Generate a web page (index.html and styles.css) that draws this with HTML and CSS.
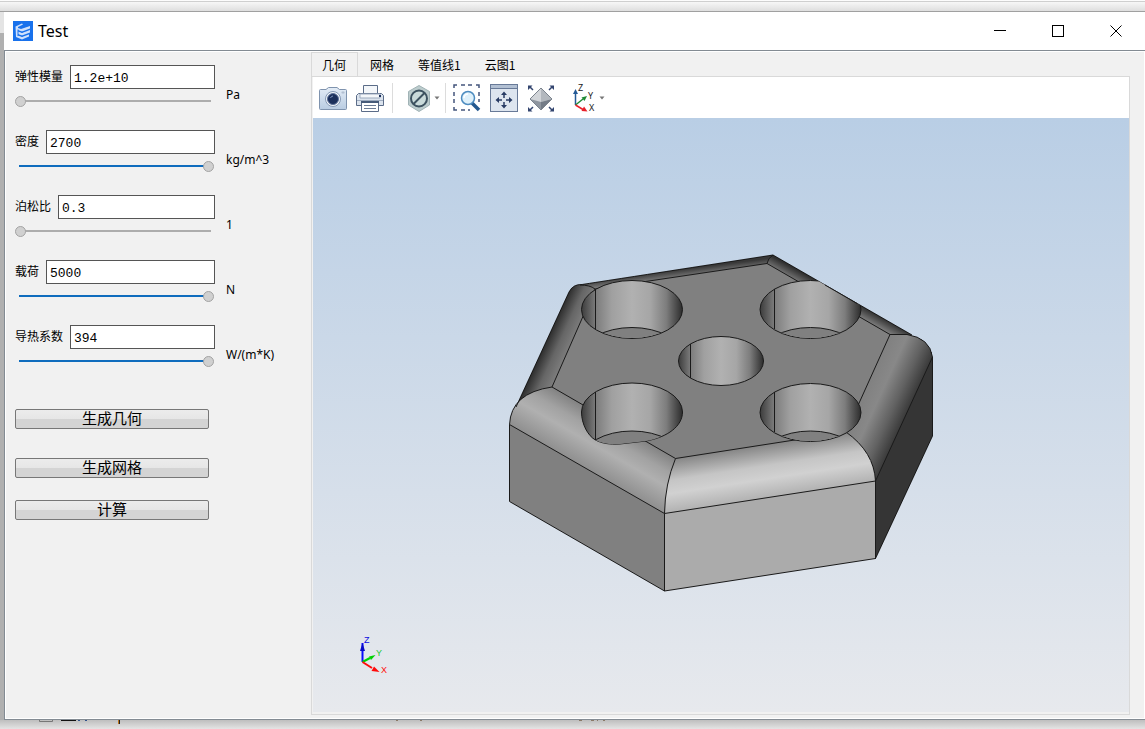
FILE: index.html
```html
<!DOCTYPE html>
<html lang="zh-CN">
<head>
    <meta charset="UTF-8">
    <meta name="viewport" content="width=device-width, initial-scale=1.0">
    <title>Test</title>
    <link rel="stylesheet" href="styles.css">
</head>
<body>
    <div class="backdrop-top"></div>

    <div class="window">
        <header class="titlebar">
            <svg class="app-icon" width="20" height="20" viewBox="0 0 20 20" aria-hidden="true">
                <rect width="20" height="20" fill="#1871ec"/>
                <path d="M2.500 5.500L9 2.500L10 3.500L5 6V7L8 8L17 5V7.500L9 10.500L5 9V10.500L9 12L17 9V11.500L9 14.500L5 13V14.500L9 16L16 13.500V15.500L9 18.500L3 16Z" fill="#cfe1fc"/>
                <path d="M5 8.500V15M9 10.500V12M9 14.500V16" stroke="#1871ec" stroke-width="1"/>
            </svg>
            <h1>Test</h1>
            <div class="window-buttons">
                <button type="button" aria-label="最小化"><svg width="12" height="12" viewBox="0 0 12 12"><path d="M0 5.500H12"/></svg></button>
                <button type="button" aria-label="最大化"><svg width="12" height="12" viewBox="0 0 12 12"><path d="M.5 .5H11.500V11.500H.5Z"/></svg></button>
                <button type="button" aria-label="关闭"><svg width="12" height="12" viewBox="0 0 12 12"><path class="cross" d="M.5 .5L11.500 11.500M11.500 .5L.5 11.500"/></svg></button>
            </div>
        </header>

        <div class="content">
            <form class="params">
                <div class="param">
                    <div class="field">
                        <label for="modulus">弹性模量</label>
                        <input type="text" id="modulus" value="1.2e+10">
                    </div>
                    <input type="range" class="slider" aria-label="弹性模量" min="0" max="100" value="0">
                    <span class="unit">Pa</span>
                </div>
                <div class="param">
                    <div class="field">
                        <label for="density">密度</label>
                        <input type="text" id="density" value="2700">
                    </div>
                    <input type="range" class="slider full" aria-label="密度" min="0" max="100" value="100">
                    <span class="unit">kg/m^3</span>
                </div>
                <div class="param">
                    <div class="field">
                        <label for="poisson">泊松比</label>
                        <input type="text" id="poisson" value="0.3">
                    </div>
                    <input type="range" class="slider" aria-label="泊松比" min="0" max="100" value="0">
                    <span class="unit">1</span>
                </div>
                <div class="param">
                    <div class="field">
                        <label for="load">载荷</label>
                        <input type="text" id="load" value="5000">
                    </div>
                    <input type="range" class="slider full" aria-label="载荷" min="0" max="100" value="100">
                    <span class="unit">N</span>
                </div>
                <div class="param">
                    <div class="field">
                        <label for="conductivity">导热系数</label>
                        <input type="text" id="conductivity" value="394">
                    </div>
                    <input type="range" class="slider full" aria-label="导热系数" min="0" max="100" value="100">
                    <span class="unit">W/(m*K)</span>
                </div>

                <div class="actions">
                    <button type="button" class="geometry">生成几何</button>
                    <button type="button" class="mesh">生成网格</button>
                    <button type="button">计算</button>
                </div>
            </form>

            <main class="viewer">
                <div class="tabs" role="tablist">
                    <button type="button" role="tab" class="active" aria-selected="true">几何</button>
                    <button type="button" role="tab">网格</button>
                    <button type="button" role="tab">等值线1</button>
                    <button type="button" role="tab">云图1</button>
                </div>

                <div class="pane">
                    <div class="toolbar">
                        <div class="group">
                            <button type="button" aria-label="截图">
                                <svg width="28" height="28" viewBox="0 0 28 28">
                                    <defs>
                                        <linearGradient id="cam" x1="0" y1="0" x2="0" y2="1"><stop offset="0" stop-color="#e3ecf6"/><stop offset="1" stop-color="#b9cce2"/></linearGradient>
                                    </defs>
                                    <path d="M1.500 5.500H7L9.500 3.500H18L20.500 5.500H26.500Q27.500 5.500 27.500 6.500V24.500Q27.500 25.500 26.500 25.500H1.500Q.5 25.500 .5 24.500V6.500Q.5 5.500 1.500 5.500Z" fill="url(#cam)" stroke="#7f93ae"/>
                                    <circle cx="14" cy="15" r="7.500" fill="#f3f7fb" stroke="#8598b4"/>
                                    <circle cx="14" cy="15" r="5.500" fill="#1b2f5b" stroke="#5d7199"/>
                                    <path d="M11.500 14A3 3 0 0 1 14 12" fill="none" stroke="#7e95bd" stroke-width="1"/>
                                    <rect x="23" y="8" width="2" height="1" fill="#fff" stroke="#8598b4" stroke-width=".5"/>
                                </svg>
                            </button>
                            <button type="button" aria-label="打印">
                                <svg width="28" height="28" viewBox="0 0 28 28">
                                    <path d="M7.500 10V1.500H21.500V10" fill="#f4f7fa" stroke="#5b6c88"/>
                                    <path d="M2.500 9.500H25.500L27.500 11.500V21.500H.5V11.500Z" fill="#dbe3ed" stroke="#5b6c88"/>
                                    <path d="M4 10H24V14H4Z" fill="#f4f7fa" stroke="#9dabbf"/>
                                    <path d="M1 16.500H27" stroke="#9dabbf"/>
                                    <path d="M5.500 17.500H22.500V27.500H5.500Z" fill="#fff" stroke="#5b6c88"/>
                                    <path d="M5 18H23" stroke="#465a79" stroke-width="2"/>
                                    <path d="M8 21.500H20M8 24.500H20" stroke="#6b7b95"/>
                                    <rect x="23" y="11" width="2" height="2" fill="#1b2f5b"/>
                                </svg>
                            </button>
                        </div>
                        <div class="group display">
                            <button type="button" class="dropdown" aria-label="显示模式">
                                <svg width="28" height="28" viewBox="0 0 28 28">
                                    <path d="M14 1.500L24.500 7.500V21L14 27.500L3.500 21V7.500Z" fill="#bccccd" stroke="#a1b3b6"/>
                                    <circle cx="14" cy="14.500" r="8" fill="#c9dada" stroke="#3d5260" stroke-width="2"/>
                                    <path d="M8.500 20L19.500 9" stroke="#3d5260" stroke-width="2"/>
                                </svg>
                                <svg class="caret" width="6" height="4" viewBox="0 0 6 4"><path d="M.5 .5H5.500L3 3.500Z" fill="#777"/></svg>
                            </button>
                        </div>
                        <div class="group views">
                            <button type="button" aria-label="框选放大">
                                <svg width="28" height="28" viewBox="0 0 28 28">
                                    <path d="M1 4V1H4M8 1H12M15 1H19M23 1H26V4M26 8V12M26 15V18M1 8V12M1 15V19M1 23V26H4M8 26H12M15 26H17" fill="none" stroke="#44557c" stroke-width="1.500"/>
                                    <path d="M19 19L26 26" stroke="#24588f" stroke-width="3.500"/>
                                    <circle cx="15" cy="14" r="6.500" fill="#dff1fb" stroke="#4d8cc0" stroke-width="1.500"/>
                                    <path d="M11 14A4 4 0 0 1 15 10" fill="none" stroke="#fff" stroke-width="1.500"/>
                                </svg>
                            </button>
                            <button type="button" aria-label="平移">
                                <svg width="28" height="28" viewBox="0 0 28 28">
                                    <rect x=".5" y=".5" width="27" height="27" fill="#dde5ef" stroke="#687a98"/>
                                    <rect x="1" y="1" width="26" height="3" fill="#b2c0d3"/>
                                    <path d="M1 4.500H27" stroke="#687a98"/>
                                    <path d="M14 10V14M14 18V22M8 16H12M16 16H20" stroke="#283b64" stroke-width="1.500"/>
                                    <path d="M14 7.500L17 11H11ZM14 24.500L17 21H11ZM5.500 16L9 13V19ZM22.500 16L19 13V19Z" fill="#283b64"/>
                                </svg>
                            </button>
                            <button type="button" aria-label="适应窗口">
                                <svg width="28" height="28" viewBox="0 0 28 28">
                                    <path d="M14 4L25 15L14 26L3 15Z" fill="#d2d5d9"/>
                                    <path d="M14 4L25 15L14 18Z" fill="#b3b8be"/>
                                    <path d="M3 15L14 18V26Z" fill="#8f969f"/>
                                    <path d="M25 15L14 18V26Z" fill="#747c87"/>
                                    <path d="M14 4L25 15L14 26L3 15Z" fill="none" stroke="#7b838d"/>
                                    <path d="M6 6L3 3M22 6L25 3M6 23L3 26M22 23L25 26" stroke="#33456f" stroke-width="1.500"/>
                                    <path d="M1 1.500H5.500L1 6ZM27 1.500H22.500L27 6ZM1 27.500H5.500L1 23ZM27 27.500H22.500L27 23Z" fill="#33456f"/>
                                </svg>
                            </button>
                        </div>
                        <div class="group axes">
                            <button type="button" class="dropdown" aria-label="视图方向">
                                <svg width="25" height="36" viewBox="0 -4 25 36">
                                    <path d="M2.500 21V9" stroke="#245a96" stroke-width="1.500"/>
                                    <path d="M2.500 5L5 10H0Z" fill="#245a96"/>
                                    <path d="M2.500 21L10 15" stroke="#1f8a35" stroke-width="1.500"/>
                                    <path d="M14 12L11.500 17L8.500 13.500Z" fill="#1f8a35"/>
                                    <path d="M2.500 21L10 25.500" stroke="#e8202a" stroke-width="1.500"/>
                                    <path d="M14.500 27.500L8.500 27L11 22.500Z" fill="#e8202a"/>
                                    <text x="5" y="7">Z</text>
                                    <text x="15" y="15">Y</text>
                                    <text x="16" y="27">X</text>
                                </svg>
                                <svg class="caret" width="6" height="4" viewBox="0 0 6 4"><path d="M.5 .5H5.500L3 3.500Z" fill="#777"/></svg>
                            </button>
                        </div>
                    </div>

                    <div class="canvas">
                        <svg class="scene" viewBox="313 118 816 594" role="img" aria-label="几何模型">
                            <defs>
                                <linearGradient id="hole" x1="0" y1="0" x2="1" y2="0">
                                    <stop offset="0" stop-color="#3c3c3c"/>
                                    <stop offset=".14" stop-color="#7c7c7c"/>
                                    <stop offset=".3" stop-color="#a0a0a0"/>
                                    <stop offset=".5" stop-color="#b1b1b1"/>
                                    <stop offset=".68" stop-color="#a6a6a6"/>
                                    <stop offset=".84" stop-color="#7d7d7d"/>
                                    <stop offset="1" stop-color="#2c2c2c"/>
                                </linearGradient>
                                <linearGradient id="filletLeft" gradientUnits="userSpaceOnUse" x1="587" y1="469" x2="614" y2="422">
                                    <stop offset="0" stop-color="#8f8f8f"/>
                                    <stop offset=".45" stop-color="#b0b0b0"/>
                                    <stop offset=".7" stop-color="#a2a2a2"/>
                                    <stop offset="1" stop-color="#818181"/>
                                </linearGradient>
                                <linearGradient id="filletFront" gradientUnits="userSpaceOnUse" x1="770" y1="497" x2="762" y2="445">
                                    <stop offset="0" stop-color="#b2b2b2"/>
                                    <stop offset=".35" stop-color="#d1d1d1"/>
                                    <stop offset=".6" stop-color="#c5c5c5"/>
                                    <stop offset="1" stop-color="#858585"/>
                                </linearGradient>
                                <linearGradient id="filletRight" gradientUnits="userSpaceOnUse" x1="904" y1="419" x2="860" y2="399">
                                    <stop offset="0" stop-color="#3a3a3a"/>
                                    <stop offset=".3" stop-color="#626262"/>
                                    <stop offset=".65" stop-color="#888"/>
                                    <stop offset="1" stop-color="#808080"/>
                                </linearGradient>
                                <linearGradient id="filletBackLeft" gradientUnits="userSpaceOnUse" x1="542" y1="349" x2="566" y2="360">
                                    <stop offset="0" stop-color="#2a2a2a"/>
                                    <stop offset=".5" stop-color="#666"/>
                                    <stop offset="1" stop-color="#808080"/>
                                </linearGradient>
                                <linearGradient id="filletBack" gradientUnits="userSpaceOnUse" x1="676" y1="270" x2="677" y2="278">
                                    <stop offset="0" stop-color="#383838"/>
                                    <stop offset="1" stop-color="#7b7b7b"/>
                                </linearGradient>
                                <linearGradient id="filletBackRight" gradientUnits="userSpaceOnUse" x1="842" y1="295" x2="837" y2="304">
                                    <stop offset="0" stop-color="#303030"/>
                                    <stop offset="1" stop-color="#797979"/>
                                </linearGradient>
                                <clipPath id="body"><path d="M500 200H677L773 255L912 335L950 357V600H500Z"/></clipPath>
                                <clipPath id="rim1"><ellipse cx="632" cy="309.500" rx="50" ry="28.500"/></clipPath>
                                <clipPath id="rim2"><ellipse cx="810.500" cy="309.500" rx="50" ry="28.500"/></clipPath>
                                <clipPath id="rim3"><path d="M581.500 412A50.500 29 0 0 1 682.500 412C682.500 426 668 437 646 441L620 444C609 444.500 602 443.500 595.500 440C588 436 581.500 424 581.500 412Z"/></clipPath>
                                <clipPath id="rim4"><ellipse cx="810.500" cy="412.500" rx="50" ry="28.500"/></clipPath>
                            </defs>

                            <g class="faces">
                                <path d="M552 387L595 289L767 263.500L890 334.500L846 432L675.500 458.500Z" fill="#808080"/>
                                <path d="M509.500 424.500L664.500 513.500V591L509.500 501.500Z" fill="#808080"/>
                                <path d="M664.500 513.500L875.500 481V558.500L664.500 591Z" fill="#ababab"/>
                                <path d="M875.500 481L932.500 357V436L875.500 558.500Z" fill="#353535"/>
                                <path d="M516 407L569 292Q573 284 582 284.500Q590 285 595 289L552 387Q530 391 516 407Z" fill="url(#filletBackLeft)"/>
                                <path d="M580 285L773 255Q768 258 767 263.500L595 289Q590 285 580 285Z" fill="url(#filletBack)"/>
                                <path d="M773 255L912 335H890L767 263.500Q768 258 773 255Z" fill="url(#filletBackRight)"/>
                                <path d="M890 334.500H907Q930 338 932.500 357L875.500 481Q874 452 846 432Z" fill="url(#filletRight)"/>
                                <path d="M509.500 424.500Q511 393 552 387L675.500 458.500Q665 484 664.500 513.500Z" fill="url(#filletLeft)"/>
                                <path d="M675.500 458.500L846 432Q874 452 875.500 481L664.500 513.500Q665 484 675.500 458.500Z" fill="url(#filletFront)"/>
                            </g>

                            <g class="edges">
                                <path d="M580 285Q590 285 595 289L552 387L675.500 458.500L846 432Q874 452 875.500 481L664.500 513.500L509.500 424.500Q511 393 552 387"/>
                                <path d="M595 289L767 263.500L890 334.500L846 432M675.500 458.500Q665 484 664.500 513.500V591"/>
                                <path d="M767 263.500Q768 258 773 255M890 334.500H907Q930 338 932.500 357L875.500 481V558.500"/>
                                <path d="M509.500 424.500V501.500L664.500 591L875.500 558.500L932.500 436V357"/>
                                <path d="M516 407L569 292Q573 284 582 284.500L773 255L912 335"/>
                            </g>

                            <g class="holes" clip-path="url(#body)">
                                <ellipse cx="632" cy="309.500" rx="50.500" ry="29"/>
                                <ellipse cx="810.500" cy="309.500" rx="50.500" ry="29"/>
                                <ellipse cx="721" cy="361" rx="42.500" ry="24.500"/>
                                <path d="M581.500 412A50.500 29 0 0 1 682.500 412C682.500 426 668 437 646 441L620 444C609 444.500 602 443.500 595.500 440C588 436 581.500 424 581.500 412Z"/>
                                <ellipse cx="810.500" cy="412.500" rx="50.500" ry="29"/>
                            </g>
                            <g class="floors">
                                <ellipse cx="632" cy="356.500" rx="50.500" ry="29" clip-path="url(#rim1)"/>
                                <ellipse cx="810.500" cy="356.500" rx="50.500" ry="29" clip-path="url(#rim2)"/>
                                <ellipse cx="632" cy="460" rx="50.500" ry="29" clip-path="url(#rim3)"/>
                                <ellipse cx="810.500" cy="460" rx="50.500" ry="29" clip-path="url(#rim4)"/>
                            </g>
                            <path class="edges" d="M595.500 289V329M774.500 289V329M690.500 344V378M595.500 392V440M774.500 392V432M825 285L857 303.500"/>

                            <g class="triad">
                                <path d="M362.500 662V643" stroke="#0a0aff" stroke-width="2"/>
                                <path d="M362.500 643L365 651H360Z" fill="#0a0ac8"/>
                                <path d="M362.500 662L370 658" stroke="#00d200" stroke-width="2"/>
                                <path d="M375.500 655L371 660L369 656.500Z" fill="#00d200"/>
                                <path d="M362.500 662L372 668" stroke="#ff0a0a" stroke-width="2"/>
                                <path d="M379.500 672L371.500 671L374 666.500Z" fill="#ff0a0a"/>
                                <text x="364" y="643" fill="#0a0ae0">Z</text>
                                <text x="376" y="656" fill="#1fc832">Y</text>
                                <text x="381" y="673" fill="#ff0a0a">X</text>
                            </g>
                        </svg>
                    </div>
                </div>
            </main>
        </div>
    </div>

    <div class="backdrop-bottom">
        <svg width="620" height="5" viewBox="0 0 620 5" aria-hidden="true">
            <path d="M39.500 0V1.500H52.500V0" fill="none" stroke="#777"/>
            <path d="M61 .5H76" stroke="#111"/>
            <path d="M78 .5H80M85 .5H87" stroke="#31528a"/>
            <path d="M118.500 0V4" stroke="#b8731c"/>
            <path d="M119.500 0V4" stroke="#222"/>
            <path d="M396 .5H398M420 .5H422M579 .5H582M591 .5H594M597 .5H598M603 .5H605" stroke="#8a7a68"/>
        </svg>
    </div>
</body>
</html>
```
FILE: styles.css
```css
* {
    box-sizing: border-box;
}

body {
    margin: 0;
    height: 100vh;
    display: flex;
    flex-direction: column;
    background: linear-gradient(to bottom, #e4e4e4 33px, #b0b0b0 33px);
    font-family: "Noto Sans", "Noto Sans CJK SC", sans-serif;
    font-size: 12px;
    color: #000;
}

button {
    padding: 0;
    border: none;
    background: none;
    font-family: "Noto Sans CJK SC", sans-serif;
    color: #000;
}

.backdrop-top {
    height: 12px;
    background: linear-gradient(to bottom, #fcfcfc 1px, #cfcfcf 1px, #cfcfcf 2px, #f7f7f7 2px, #dedede 11px);
    border-bottom: 1px solid #a0a0a0;
}

.backdrop-bottom {
    height: 9px;
    background: linear-gradient(to bottom, #bebebe, #e4e4e4);
}

.backdrop-bottom svg {
    display: block;
}

.window {
    flex: 1;
    min-height: 0;
    margin-left: 4px;
    display: flex;
    flex-direction: column;
    background: #fff;
}

.titlebar {
    height: 38px;
    display: flex;
    align-items: center;
    gap: 5px;
    padding-left: 9px;
}

.titlebar h1 {
    flex: 1;
    margin: 0;
    font-size: 16px;
    font-weight: normal;
}

.window-buttons {
    display: flex;
    align-self: stretch;
}

.window-buttons button {
    width: 58px;
    display: flex;
    align-items: center;
    justify-content: center;
}

.window-buttons path {
    fill: none;
    stroke: #000;
    shape-rendering: crispEdges;
}

.window-buttons .cross {
    shape-rendering: auto;
}

.content {
    flex: 1;
    min-height: 0;
    display: flex;
    border: 1px solid #838b93;
    border-right: none;
    background: #f1f1f1;
    box-shadow: inset 0 0 0 1px #fff;
}

.params {
    width: 306px;
    padding: 14px 10px;
}

.param {
    display: grid;
    grid-template-columns: 200px 1fr;
    column-gap: 11px;
    row-gap: 7px;
    margin-bottom: 23px;
}

.field {
    display: flex;
    gap: 7px;
}

.field label {
    line-height: 24px;
    white-space: nowrap;
}

.field input {
    flex: 1;
    min-width: 0;
    height: 24px;
    padding: 2px 3px 0;
    border: 1px solid #555;
    background: #fff;
    font-family: "Liberation Mono", monospace;
    font-size: 13px;
    color: #000;
}

.slider {
    grid-row: 2;
    -webkit-appearance: none;
    appearance: none;
    width: 199px;
    height: 11px;
    margin: 0;
    background: linear-gradient(#adadad, #adadad) 4px 4px / calc(100% - 7px) 2px no-repeat;
}

.slider.full {
    background-image: linear-gradient(#0f6cbd, #0f6cbd);
}

.slider::-webkit-slider-thumb {
    -webkit-appearance: none;
    width: 11px;
    height: 11px;
    border: 1px solid #a3a3a3;
    border-radius: 50%;
    background: #d0d0d0;
}

.unit {
    grid-column: 2;
    grid-row: 1 / 3;
    align-self: end;
    line-height: 24px;
}

.actions {
    display: flex;
    flex-direction: column;
    align-items: flex-start;
    padding-top: 19px;
}

.actions button {
    width: 194px;
    height: 20px;
    border: 1px solid #777;
    border-radius: 2px;
    background: linear-gradient(to bottom, #ececec, #e6e6e6 50%, #d4d4d4 50%, #d4d4d4);
    font-size: 15px;
    line-height: 16px;
    padding-bottom: 2px;
}

.actions .geometry {
    margin-bottom: 29px;
}

.actions .mesh {
    margin-bottom: 22px;
}

.viewer {
    flex: 1;
    min-width: 0;
    display: flex;
    flex-direction: column;
    padding: 1px 15px 4px 0;
}

.tabs {
    display: flex;
}

.tabs button {
    height: 24px;
    padding: 0 11px;
    border: 1px solid transparent;
    border-bottom: none;
    font-size: 12px;
}

.tabs .active {
    padding: 0 11px 0 10px;
    border-color: #d9d9d9;
}

.pane {
    flex: 1;
    min-height: 0;
    display: flex;
    flex-direction: column;
    padding: 0 0 2px 1px;
    border: 1px solid #d9d9d9;
}

.toolbar {
    display: flex;
    align-items: center;
    height: 41px;
    background: #fff;
}

.group {
    display: flex;
    align-items: center;
    gap: 9px;
    height: 30px;
    padding: 0 8px 0 6px;
}

.group button,
.group svg {
    display: block;
}

.group .dropdown {
    display: flex;
    align-items: center;
    gap: 1px;
}

.group.display {
    padding: 0 5px 0 12px;
    border-left: 1px solid #dcdcdc;
    border-right: 1px solid #dcdcdc;
}

.group.views {
    padding: 0 0 0 7px;
}

.group.axes {
    padding: 0 0 0 18px;
}

.group text {
    font: 9px "Noto Sans", sans-serif;
    fill: #222;
}

.canvas {
    flex: 1;
    min-height: 0;
    background: linear-gradient(to bottom, #b9cee5, #e7e9ed);
}

.scene {
    display: block;
    width: 100%;
    height: 100%;
}

.faces path {
    shape-rendering: crispEdges;
}

.edges {
    fill: none;
    stroke: #1a1a1a;
    stroke-width: 1;
}

.holes ellipse,
.holes path {
    fill: url(#hole);
    stroke: #1a1a1a;
}

.floors ellipse {
    fill: #808080;
    stroke: #1a1a1a;
}

.triad text {
    font: 9px "Liberation Sans", sans-serif;
}
```
